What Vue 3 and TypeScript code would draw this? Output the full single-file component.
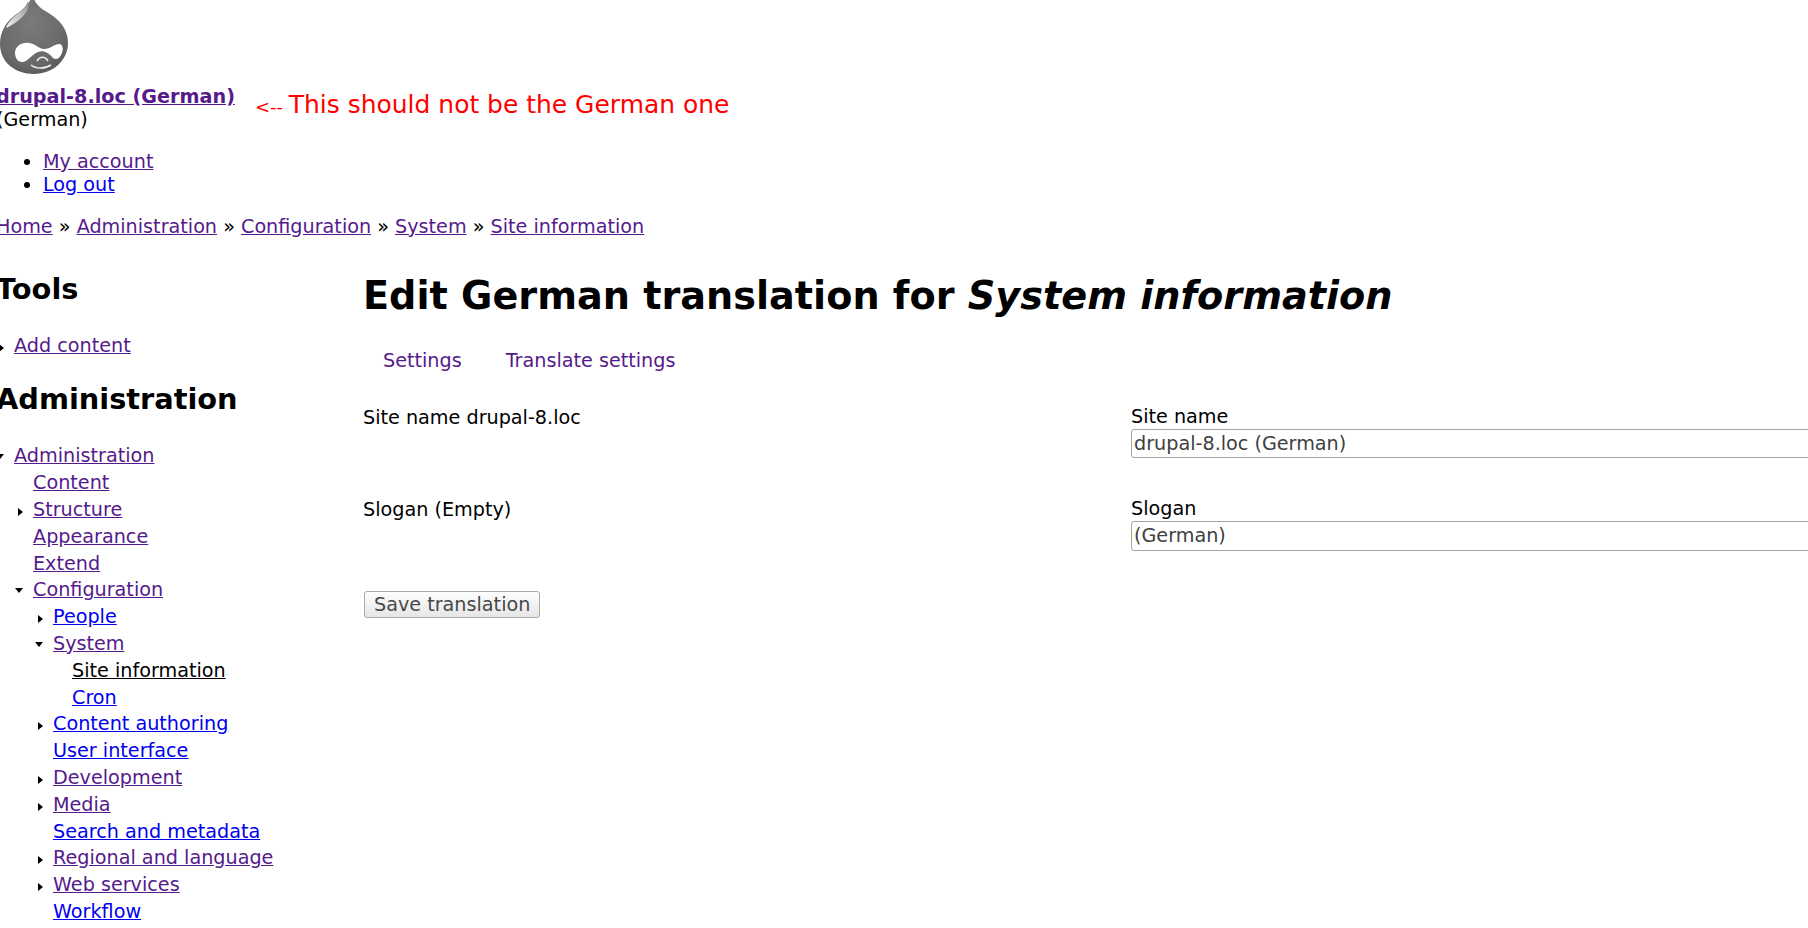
<script setup lang="ts">
interface Item { label: string; level: number; arrow?: 'open' | 'closed'; tone?: 'visited' | 'link' | 'active' }
const items: Item[] = [
  { label: 'Administration', level: 0, arrow: 'open' },
  { label: 'Content', level: 1 },
  { label: 'Structure', level: 1, arrow: 'closed' },
  { label: 'Appearance', level: 1 },
  { label: 'Extend', level: 1 },
  { label: 'Configuration', level: 1, arrow: 'open' },
  { label: 'People', level: 2, arrow: 'closed', tone: 'link' },
  { label: 'System', level: 2, arrow: 'open' },
  { label: 'Site information', level: 3, tone: 'active' },
  { label: 'Cron', level: 3, tone: 'link' },
  { label: 'Content authoring', level: 2, arrow: 'closed', tone: 'link' },
  { label: 'User interface', level: 2, tone: 'link' },
  { label: 'Development', level: 2, arrow: 'closed' },
  { label: 'Media', level: 2, arrow: 'closed' },
  { label: 'Search and metadata', level: 2, tone: 'link' },
  { label: 'Regional and language', level: 2, arrow: 'closed' },
  { label: 'Web services', level: 2, arrow: 'closed' },
  { label: 'Workflow', level: 2, tone: 'link' },
]
const crumbs = ['Home', 'Administration', 'Configuration', 'System', 'Site information']
</script>

<template>
  <div class="page">
    <header class="head">
      <svg class="logo" width="70" height="76" viewBox="0 0 70 76">
        <defs>
          <radialGradient id="drop" cx="0.45" cy="0.35" r="0.7">
            <stop offset="0" stop-color="#7a7a7a" />
            <stop offset="0.75" stop-color="#696969" />
            <stop offset="1" stop-color="#585858" />
          </radialGradient>
          <linearGradient id="shine" x1="0" y1="1" x2="1" y2="0">
            <stop offset="0" stop-color="#f4f4f4" />
            <stop offset="0.6" stop-color="#bbb" />
            <stop offset="1" stop-color="#888" />
          </linearGradient>
        </defs>
        <path d="M32 -6C31 4 22 10 14 16C6 22 0 32 0 44C0 62 15 74 34 74C53 74 68 60 68 43C68 27 57 18 47 12C40 8 35 4 32 -6Z" fill="url(#drop)" />
        <path d="M28 1C26 8 19 12 14 17C10 21 7 24 6 28C13 25 23 18 27 11C29 7 29 4 28 1Z" fill="url(#shine)" />
        <path d="M15 53C15 46 22 42 29 43C36 44 39 49 44 49C50 49 55 44 59 44C63 44 64 50 61 55C59 59 56 60 53 58C49 53 43 50 38 52C32 54 28 62 22 62C18 62 15 58 15 53Z" fill="#fff" />
        <path d="M37 61C40 56 45 56 48 61M31 65C36 69 45 69 51 65" fill="none" stroke="#eee" stroke-width="1.6" />
      </svg>
      <a class="title visited" href="#">drupal-8.loc (German)</a>
      <div class="slogan">(German)</div>
      <span class="note"><span class="arrow">&lt;-- </span>This should not be the German one</span>
      <ul class="user">
        <li><a class="visited" href="#">My account</a></li>
        <li><a class="link" href="#">Log out</a></li>
      </ul>
    </header>
    <nav class="crumbs">
      <template v-for="(c, i) in crumbs" :key="c">
        <a class="visited" href="#">{{ c }}</a><span v-if="i < crumbs.length - 1"> » </span>
      </template>
    </nav>
    <div class="columns">
      <aside class="side">
        <h2>Tools</h2>
        <div class="tool"><i class="tri closed"></i><a class="visited" href="#">Add content</a></div>
        <h2 class="admin">Administration</h2>
        <ul class="menu">
          <li v-for="it in items" :key="it.label" :class="'lv' + it.level">
            <i v-if="it.arrow" class="tri" :class="it.arrow"></i>
            <a :class="it.tone ?? 'visited'" href="#">{{ it.label }}</a>
          </li>
        </ul>
      </aside>
      <main class="main">
        <h1>Edit German translation for <em>System information</em></h1>
        <div class="tabs">
          <a href="#">Settings</a>
          <a href="#">Translate settings</a>
        </div>
        <form class="form" @submit.prevent>
          <div class="row">
            <div class="src">Site name drupal-8.loc</div>
            <div class="dst">
              <label for="f1">Site name</label>
              <input id="f1" value="drupal-8.loc (German)" />
            </div>
          </div>
          <div class="row">
            <div class="src">Slogan (Empty)</div>
            <div class="dst">
              <label for="f2">Slogan</label>
              <input id="f2" class="tall" value="(German)" />
            </div>
          </div>
          <button type="submit">Save translation</button>
        </form>
      </main>
    </div>
  </div>
</template>

<style>
html, body { overflow: hidden; background: #fff; }
</style>

<style scoped>
.page {
  width: 2000px;
  height: 928px;
  overflow: hidden;
  margin-left: -4px;
  font: 19.2px/26.8px "DejaVu Sans", sans-serif;
  color: #000;
}
a { color: #551a8b; }
a.link { color: #0000ee; }
a.active { color: #000; }
.head { position: relative; }
.logo { display: block; margin-left: 4px; height: 76px; }
.title { display: block; font-weight: 700; margin-top: 8px; width: max-content; }
.slogan { margin-top: -4px; }
.note {
  position: absolute;
  left: 259px;
  top: 88px;
  font-size: 24.96px;
  line-height: 34px;
  color: #f00;
}
.arrow { font-size: 18px; }
.user { margin: 16px 0 0; padding-left: 47px; line-height: 23px; }
.crumbs { margin-top: 18px; }
.columns { display: flex; margin-top: 19px; }
.side { width: 367px; flex: none; }
h2 { font-size: 28.8px; line-height: 40px; margin: 10px 0 0; }
.tool { margin-top: 23.2px; padding-left: 18px; position: relative; }
.admin { margin-top: 20px; }
.menu { list-style: none; margin: 24px 0 0; padding: 0; }
.menu li { position: relative; }
.lv0 { padding-left: 18px; }
.lv1 { padding-left: 37px; }
.lv2 { padding-left: 57px; }
.lv3 { padding-left: 76px; }
.tri { position: absolute; width: 0; height: 0; border-style: solid; }
.tri.closed { border-width: 4px 0 4px 5px; border-color: transparent transparent transparent #000; margin-top: 11px; margin-left: -15px; }
.tri.open { border-width: 5px 4.5px 0; border-color: #000 transparent transparent; margin-top: 11px; margin-left: -18px; }
.main { flex: none; width: 1600px; }
h1 { font-size: 38.2px; line-height: 54px; margin: 0; padding-top: 10px; }
.tabs { display: flex; margin-top: 24.5px; }
.tabs a { padding: 0 22px 0 20px; text-decoration: none; }
.tabs a + a { padding-left: 22px; }
.form { margin-top: 30px; }
.row { display: flex; height: 92px; }
.src { width: 768px; flex: none; }
.dst { width: 800px; }
label { display: block; line-height: 24px; }
input {
  display: block;
  width: 100%;
  box-sizing: border-box;
  height: 29px;
  border: 1px solid #a6a29c;
  border-radius: 3px;
  padding: 0 2px;
  font: inherit;
  color: #404040;
}
input.tall { height: 30px; }
button {
  margin: 2px 0 0 1px;
  font: inherit;
  color: #484848;
  height: 27px;
  line-height: 23px;
  padding: 0 9px;
  border: 1px solid #aaa;
  border-radius: 3px;
  background: linear-gradient(#fefefe, #e6e6e6);
}
</style>
